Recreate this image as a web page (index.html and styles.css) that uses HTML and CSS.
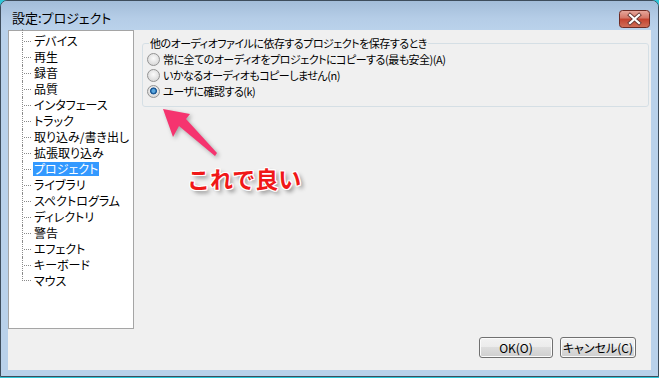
FILE: index.html
```html
<!DOCTYPE html>
<html lang="ja">
  <head>
    <meta charset="UTF-8" />
    <title>設定:プロジェクト</title>
    <link rel="stylesheet" href="styles.css">
  </head>
  <body>
    <div class="window">
      <div class="titlebar">
        <span class="title">設定:プロジェクト</span>
        <span class="close-btn">
          <svg width="31" height="18" viewBox="0 0 31 18">
            <defs>
              <linearGradient id="closeGrad" x1="0" y1="0" x2="0" y2="1">
                <stop offset="0" stop-color="#e8a99e" />
                <stop offset="0.45" stop-color="#d47565" />
                <stop offset="0.5" stop-color="#c4412e" />
                <stop offset="1" stop-color="#d0705a" />
              </linearGradient>
            </defs>
            <rect x="0.5" y="0.5" width="30" height="17" rx="3" fill="url(#closeGrad)" stroke="#6d2b24" />
            <path d="M11 5 L20 13 M20 5 L11 13" stroke="#6a3a35" stroke-width="4" stroke-linecap="square" />
            <path d="M11 5 L20 13 M20 5 L11 13" stroke="#ffffff" stroke-width="2.2" stroke-linecap="square" />
          </svg>
        </span>
      </div>
      <div class="frame">
        <div class="client">
          <div class="main">
            <ul class="tree">
              <li><span>デバイス</span></li>
              <li><span>再生</span></li>
              <li><span>録音</span></li>
              <li><span>品質</span></li>
              <li><span>インタフェース</span></li>
              <li><span>トラック</span></li>
              <li><span>取り込み/書き出し</span></li>
              <li><span>拡張取り込み</span></li>
              <li><span class="selected">プロジェクト</span></li>
              <li><span>ライブラリ</span></li>
              <li><span>スペクトログラム</span></li>
              <li><span>ディレクトリ</span></li>
              <li><span>警告</span></li>
              <li><span>エフェクト</span></li>
              <li><span>キーボード</span></li>
              <li><span>マウス</span></li>
            </ul>
            <div class="pane">
              <fieldset class="group">
                <legend>他のオーディオファイルに依存するプロジェクトを保存するとき</legend>
                <label class="radio-row"><span class="radio"></span>常に全てのオーディオをプロジェクトにコピーする(最も安全)(A)</label>
                <label class="radio-row"><span class="radio"></span>いかなるオーディオもコピーしません(n)</label>
                <label class="radio-row"><span class="radio checked"></span>ユーザに確認する(k)</label>
              </fieldset>
            </div>
          </div>
          <div class="buttons">
            <button class="btn btn-ok">OK(O)</button>
            <button class="btn btn-cancel">キャンセル(C)</button>
          </div>
        </div>
      </div>
    </div>

    <!-- annotation drawn over the screenshot -->
    <svg class="note-arrow" width="659" height="378" viewBox="0 0 659 378">
      <polygon points="163,109 190,114 186,119 217,153 215,156 179,126 173,137" fill="#f5346f" />
    </svg>
    <div class="note-text">これで良い</div>
  </body>
</html>
```
FILE: styles.css
```css
body,
ul,
li,
fieldset,
legend,
button {
  margin: 0;
  padding: 0;
  box-sizing: border-box;
}

body {
  position: relative;
  width: 659px;
  height: 378px;
  background-color: #2fc6d8;
  font-family: "Noto Sans CJK JP", sans-serif;
  font-feature-settings: "palt";
  font-size: 12px;
  color: #000;
}

.window {
  width: 659px;
  height: 377px;
  border: 1px solid #3e4d5c;
  border-radius: 7px 7px 0 0;
  background-color: #b9d1ea;
  display: flex;
  flex-direction: column;
  box-sizing: border-box;
  overflow: hidden;
}

.titlebar {
  height: 29px;
  display: flex;
  justify-content: space-between;
  align-items: flex-start;
  padding: 0 8px 0 11px;
  background: linear-gradient(to bottom, #a3bdd9, #b5cde7 60%, #bad2eb);
}

.title {
  margin-top: 9px;
  font-size: 13px;
  line-height: 16px;
}

.close-btn {
  margin-top: 9px;
  width: 31px;
  height: 18px;
}

.close-btn svg {
  display: block;
}

.frame {
  flex-grow: 1;
  padding: 0 7px 6px 7px;
  display: flex;
}

.client {
  flex-grow: 1;
  background-color: #f0f0f0;
  display: flex;
  flex-direction: column;
}

.main {
  display: flex;
  height: 299px;
}

/* tree list on the left */
.tree {
  width: 126px;
  border: 1px solid #a5a5a5;
  background-color: #fff;
  list-style: none;
  padding: 2px 0 0 13px;
}

.tree li {
  height: 16px;
  display: flex;
  align-items: center;
}

.tree li::before {
  content: "";
  width: 9px;
  height: 16px;
  border-left: 1px dotted #8a8a8a;
  background: repeating-linear-gradient(to right, #8a8a8a 0 1px, transparent 1px 2px) 1px center / 8px 1px no-repeat;
  box-sizing: content-box;
}

.tree li:first-child::before {
  margin-top: -4px;
  height: 20px;
  background-position: 1px 12px;
}

.tree li:last-child::before {
  height: 8px;
  align-self: flex-start;
  background-position: 1px bottom;
}

.tree li span {
  padding: 0 1px;
  margin-left: 1px;
  line-height: 14px;
  white-space: nowrap;
}

.tree li span.selected {
  background-color: #3399ff;
  color: #fff;
}

/* right side */
.pane {
  flex-grow: 1;
  padding: 5px 2px 0 8px;
  font-size: 11px;
  letter-spacing: -0.5px;
}

.group {
  border: 1px solid #d5dfe5;
  border-radius: 3px;
  padding: 0 0 7px 4px;
  min-width: 0;
}

.group legend {
  margin-left: 2px;
  padding: 0 1px;
  line-height: 16px;
}

.radio-row {
  display: flex;
  align-items: center;
  height: 16px;
  white-space: nowrap;
}

.radio {
  width: 13px;
  height: 13px;
  margin-right: 3px;
  border-radius: 50%;
  border: 1px solid #939393;
  box-sizing: border-box;
  background: radial-gradient(circle at 50% 40%, #fbfbfb, #dcdcdc 70%, #cfcfcf);
}

.radio.checked {
  background:
    radial-gradient(circle at 50% 45%, #5aa8e0 0 1.5px, #1d5b98 2.5px 3.2px, transparent 3.8px),
    radial-gradient(circle at 50% 40%, #fbfbfb, #dcdcdc 70%, #cfcfcf);
}

/* dialog buttons */
.buttons {
  display: flex;
  justify-content: flex-end;
  gap: 7px;
  margin-top: 8px;
  padding-right: 15px;
}

.btn {
  height: 21px;
  border: 1px solid #707070;
  border-radius: 3px;
  background: linear-gradient(to bottom, #f2f2f2 0%, #ebebeb 50%, #dddddd 50%, #cfcfcf 100%);
  box-shadow: inset 0 0 0 1px #fbfbfb;
  font-family: "Noto Sans CJK JP", sans-serif;
  font-feature-settings: "palt";
  font-size: 12px;
  line-height: 17px;
  color: #000;
}

.btn-ok {
  width: 74px;
}

.btn-cancel {
  width: 76px;
}

/* annotation */
.note-arrow {
  position: absolute;
  left: 0;
  top: 0;
  pointer-events: none;
  filter: drop-shadow(2px 2px 2px rgba(0, 0, 0, 0.3));
}

.note-text {
  position: absolute;
  left: 187px;
  top: 165px;
  font-size: 23px;
  line-height: 26px;
  font-weight: bold;
  font-feature-settings: normal;
  color: #f01818;
  text-shadow:
    1px 0 0 #fff, -1px 0 0 #fff, 0 1px 0 #fff, 0 -1px 0 #fff,
    1px 1px 0 #fff, -1px -1px 0 #fff, 1px -1px 0 #fff, -1px 1px 0 #fff,
    3px 3px 4px rgba(0, 0, 0, 0.45);
}
```
